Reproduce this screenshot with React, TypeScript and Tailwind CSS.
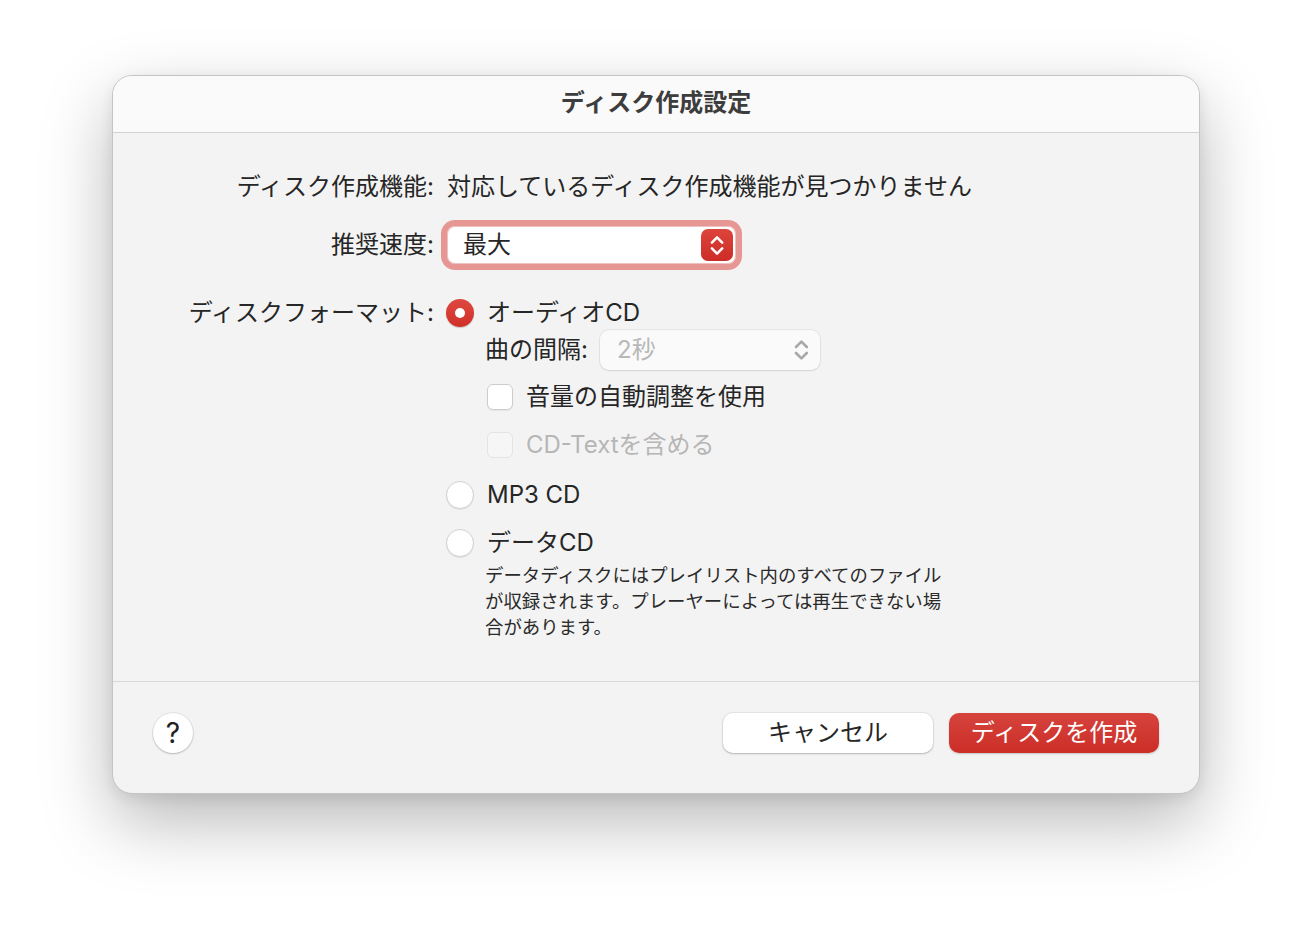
import React from 'react';

const font = { fontFamily: 'Inter, "Noto Sans CJK JP", "Noto Sans", sans-serif' };

function Chevrons({ color, size = 18 }: { color: string; size?: number }) {
  return (
    <svg width={size * 0.7} height={size} viewBox="0 0 14 20" fill="none">
      <path d="M2.5 7.5 7 3l4.5 4.5" stroke={color} strokeWidth="2.2" strokeLinecap="round" strokeLinejoin="round" />
      <path d="M2.5 12.5 7 17l4.5-4.5" stroke={color} strokeWidth="2.2" strokeLinecap="round" strokeLinejoin="round" />
    </svg>
  );
}

function Radio({ on }: { on?: boolean }) {
  if (on) {
    return (
      <span className="flex h-[28px] w-[28px] shrink-0 items-center justify-center rounded-full bg-gradient-to-b from-[#dd4840] to-[#cf2f28] shadow-[0_1px_1px_rgba(0,0,0,0.2)]">
        <span className="h-[10px] w-[10px] rounded-full bg-white" />
      </span>
    );
  }
  return (
    <span className="h-[28px] w-[28px] shrink-0 rounded-full border border-[#d2d2d2] bg-white shadow-[0_1px_1px_rgba(0,0,0,0.08)]" />
  );
}

function Check({ disabled }: { disabled?: boolean }) {
  return (
    <span
      className={
        disabled
          ? 'h-[26px] w-[26px] shrink-0 rounded-[6px] border border-[#e3e3e3] bg-[#f6f6f6]'
          : 'h-[26px] w-[26px] shrink-0 rounded-[6px] border border-[#cdcdcd] bg-white shadow-[0_1px_1px_rgba(0,0,0,0.06)]'
      }
    />
  );
}

export default function App() {
  return (
    <div className="min-h-[942px] w-[1312px] bg-white pl-[112px] pt-[75px]" style={font}>
      <div className="w-[1088px] overflow-hidden rounded-[20px] border border-[#c4c4c4] bg-[#f3f3f3] shadow-[0_28px_70px_rgba(0,0,0,0.28),0_4px_14px_rgba(0,0,0,0.08)]">
        {/* title bar */}
        <div className="flex h-[57px] items-center justify-center border-b border-[#d2d2d2] bg-[#fafafa] pb-[3px]">
          <span className="text-[24px] font-bold text-[#3d3d3d]">ディスク作成設定</span>
        </div>

        {/* body */}
        <div className="h-[548px] whitespace-nowrap pt-[38px] text-[24px] text-[#262626]">
          <div className="flex h-[32px] items-center">
            <span className="w-[321px] text-right">ディスク作成機能:</span>
            <span className="ml-[13px]">対応しているディスク作成機能が見つかりません</span>
          </div>

          <div className="mt-[17px] flex h-[50px] items-center">
            <span className="w-[321px] text-right">推奨速度:</span>
            <div className="ml-[13px] flex h-[38px] w-[289px] items-center justify-between rounded-[8px] bg-white pl-[16px] pr-[3px] ring-[6px] ring-[#e69693] shadow-[inset_0_0_0_1px_rgba(210,80,75,0.35)]">
              <span>最大</span>
              <span className="flex h-[32px] w-[32px] items-center justify-center rounded-[7px] bg-gradient-to-b from-[#dc443c] to-[#cc2c26]">
                <Chevrons color="#ffffff" size={23} />
              </span>
            </div>
          </div>

          <div className="mt-[27px] flex items-start">
            <span className="flex h-[32px] w-[321px] items-center justify-end">ディスクフォーマット:</span>
            <div className="ml-[12px] flex flex-col">
              <div className="flex h-[32px] items-center gap-[13px]">
                <Radio on />
                <span>オーディオCD</span>
              </div>
              <div className="ml-[39px] mt-[1px] flex h-[40px] items-center">
                <span className="w-[102px] whitespace-nowrap">曲の間隔:</span>
                <div className="ml-[13px] flex h-[40px] w-[220px] items-center justify-between rounded-[9px] bg-[#fafafa] pl-[17px] pr-[10px] text-[#b8b8b8] shadow-[0_0_0_1px_rgba(0,0,0,0.05),0_1px_2px_rgba(0,0,0,0.08)]">
                  <span>2秒</span>
                  <Chevrons color="#a8a8a8" size={24} />
                </div>
              </div>
              <div className="ml-[41px] mt-[3px] flex h-[48px] items-center gap-[13px]">
                <Check />
                <span>音量の自動調整を使用</span>
              </div>
              <div className="ml-[41px] flex h-[48px] items-center gap-[13px] text-[#b6b6b6]">
                <Check disabled />
                <span>CD-Textを含める</span>
              </div>
              <div className="mt-[2px] flex h-[48px] items-center gap-[13px]">
                <Radio />
                <span>MP3 CD</span>
              </div>
              <div className="mt-[8px] flex h-[32px] items-center gap-[13px]">
                <Radio />
                <span>データCD</span>
              </div>
              <p className="ml-[39px] mt-[3px] w-[480px] text-[18.4px] leading-[26px] text-[#2a2a2a]">
                データディスクにはプレイリスト内のすべてのファイル
                <br />
                が収録されます。プレーヤーによっては再生できない場
                <br />
                合があります。
              </p>
            </div>
          </div>
        </div>

        {/* footer */}
        <div className="flex h-[112px] items-start justify-between border-t border-[#d8d8d8] px-[40px] pt-[31px]">
          <button className="flex h-[40px] w-[40px] items-center justify-center rounded-full bg-white text-[28px] font-normal text-[#222] shadow-[0_0_0_1px_rgba(0,0,0,0.06),0_1px_2px_rgba(0,0,0,0.2)]">
            ?
          </button>
          <div className="flex gap-[16px]">
            <button className="h-[40px] w-[210px] rounded-[10px] bg-white text-[24px] text-[#262626] shadow-[0_0_0_1px_rgba(0,0,0,0.05),0_1px_2px_rgba(0,0,0,0.22)]">
              キャンセル
            </button>
            <button className="h-[40px] w-[210px] rounded-[10px] bg-gradient-to-b from-[#d6433d] to-[#cc2d27] text-[24px] text-white shadow-[0_1px_2px_rgba(0,0,0,0.2)]">
              ディスクを作成
            </button>
          </div>
        </div>
      </div>
    </div>
  );
}
